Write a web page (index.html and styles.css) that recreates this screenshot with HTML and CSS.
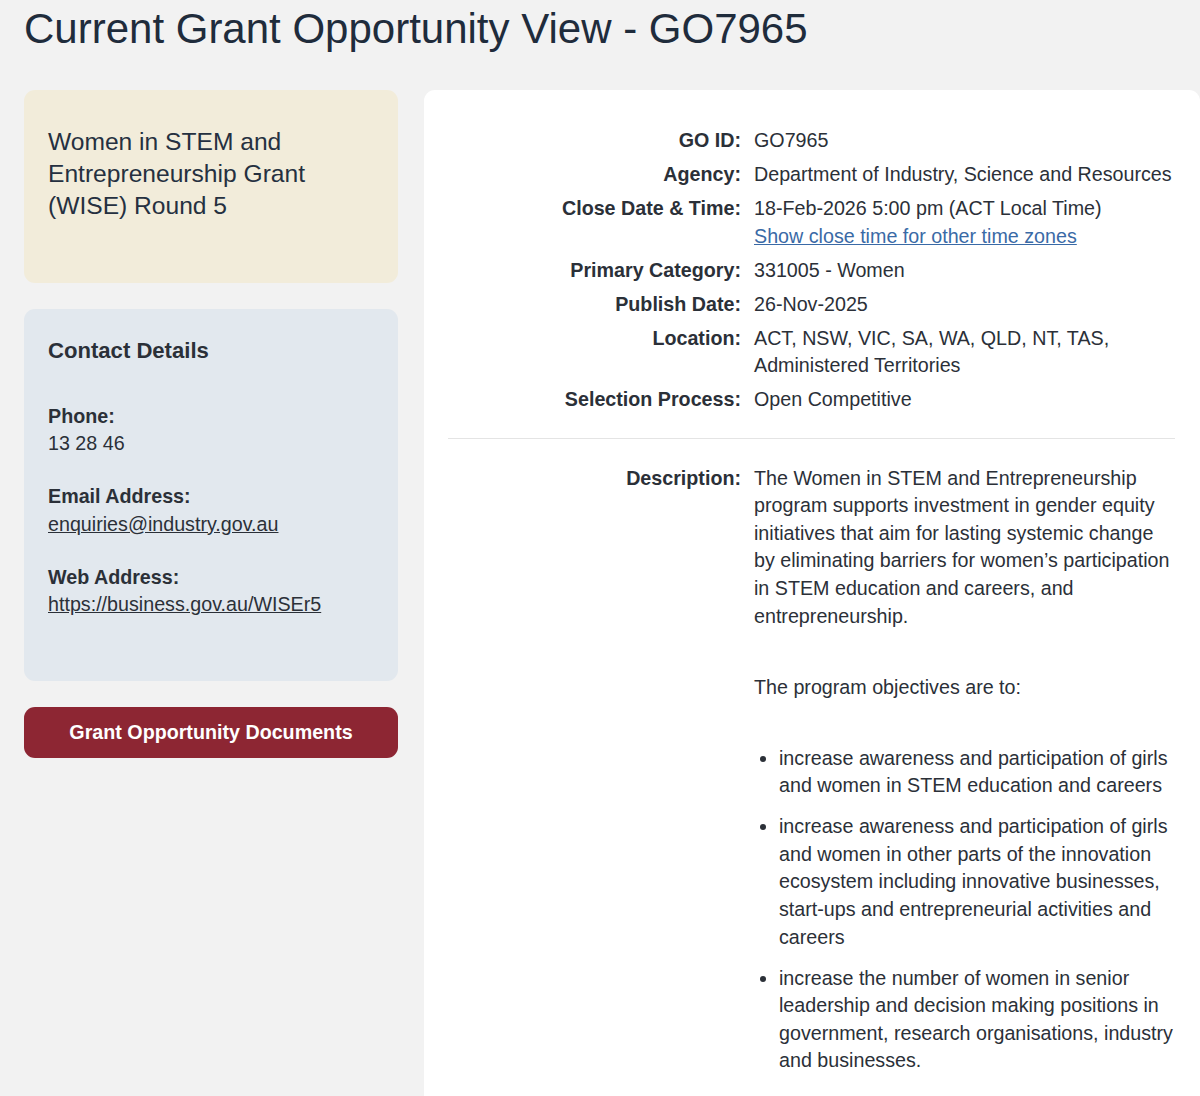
FILE: index.html
```html
<!DOCTYPE html>
<html lang="en">
<head>
<meta charset="utf-8">
<title>Current Grant Opportunity View - GO7965</title>
<link rel="stylesheet" href="styles.css">
</head>
<body>
<div class="page">
  <h1 class="page-title">Current Grant Opportunity View - GO7965</h1>
  <div class="layout">
    <aside class="sidebar">
      <div class="card card-title">
        <h2>Women in STEM and Entrepreneurship Grant (WISE) Round 5</h2>
      </div>
      <div class="card card-contact">
        <h3>Contact Details</h3>
        <div class="contact-group">
          <div class="contact-label">Phone:</div>
          <div class="contact-value">13 28 46</div>
        </div>
        <div class="contact-group">
          <div class="contact-label">Email Address:</div>
          <div class="contact-value"><a href="#">enquiries@industry.gov.au</a></div>
        </div>
        <div class="contact-group">
          <div class="contact-label">Web Address:</div>
          <div class="contact-value"><a href="#">https://business.gov.au/WISEr5</a></div>
        </div>
      </div>
      <a class="btn-docs" href="#">Grant Opportunity Documents</a>
    </aside>
    <main class="panel">
      <dl class="details">
        <dt>GO ID:</dt>
        <dd>GO7965</dd>
        <dt>Agency:</dt>
        <dd>Department of Industry, Science and Resources</dd>
        <dt>Close Date &amp; Time:</dt>
        <dd>18-Feb-2026 5:00 pm (ACT Local Time)<br><a class="tz-link" href="#">Show close time for other time zones</a></dd>
        <dt>Primary Category:</dt>
        <dd>331005 - Women</dd>
        <dt>Publish Date:</dt>
        <dd>26-Nov-2025</dd>
        <dt>Location:</dt>
        <dd>ACT, NSW, VIC, SA, WA, QLD, NT, TAS, Administered Territories</dd>
        <dt>Selection Process:</dt>
        <dd>Open Competitive</dd>
      </dl>
      <hr class="divider">
      <dl class="details">
        <dt>Description:</dt>
        <dd class="description">
          <p>The Women in STEM and Entrepreneurship program supports investment in gender equity initiatives that aim for lasting systemic change by eliminating barriers for women’s participation in STEM education and careers, and entrepreneurship.</p>
          <p>The program objectives are to:</p>
          <ul>
            <li>increase awareness and participation of girls and women in STEM education and careers</li>
            <li>increase awareness and participation of girls and women in other parts of the innovation ecosystem including innovative businesses, start-ups and entrepreneurial activities and careers</li>
            <li>increase the number of women in senior leadership and decision making positions in government, research organisations, industry and businesses.</li>
          </ul>
        </dd>
      </dl>
    </main>
  </div>
</div>
</body>
</html>
```
FILE: styles.css
```css
* { box-sizing: border-box; }
html, body { margin: 0; padding: 0; }
body {
  background: #f2f2f2;
  font-family: "Liberation Sans", Arial, Helvetica, sans-serif;
  color: #2b3038;
  font-size: 19.7px;
  line-height: 27.6px;
}
.page {
  padding: 0 0 0 24px;
}
.page-title {
  margin: 0;
  padding: 5px 0 0 0;
  font-size: 42px;
  line-height: 48px;
  font-weight: normal;
  color: #1f2c3c;
  height: 90px;
}
.layout {
  display: grid;
  grid-template-columns: 374px 1fr;
  column-gap: 26px;
  align-items: start;
}
.sidebar {
  display: flex;
  flex-direction: column;
  gap: 26px;
}
.card {
  border-radius: 11px;
  padding: 0 24px;
}
.card-title {
  background: #f2ecda;
  padding-top: 36px;
  padding-bottom: 61px;
}
.card-title h2 {
  margin: 0;
  font-size: 24.6px;
  line-height: 32px;
  font-weight: normal;
  color: #253040;
}
.card-contact {
  background: #e2e8ee;
  padding-top: 28px;
  padding-bottom: 36px;
}
.card-contact h3 {
  margin: 0 0 37px 0;
  font-size: 22.1px;
  line-height: 28.5px;
  font-weight: bold;
  color: #2b3038;
}
.contact-group {
  margin-bottom: 25.5px;
}
.contact-label {
  font-weight: bold;
}
.contact-value a {
  color: #2b3038;
  text-decoration: underline;
}
.btn-docs {
  display: block;
  height: 51px;
  line-height: 51px;
  background: #8d2633;
  color: #ffffff;
  font-weight: bold;
  text-align: center;
  text-decoration: none;
  border-radius: 11px;
}
.panel {
  background: #ffffff;
  border-radius: 11px 11px 0 0;
  padding: 37px 25px 40px 24px;
  min-height: 1006px;
}
.details {
  display: grid;
  grid-template-columns: 293px 1fr;
  column-gap: 13px;
  row-gap: 6.4px;
  margin: 0;
}
.details dt {
  font-weight: bold;
  text-align: right;
  color: #2b3038;
}
.details dd {
  margin: 0;
}
.tz-link {
  color: #3a6aa6;
  text-decoration: underline;
}
.divider {
  border: 0;
  border-top: 1px solid #e4e4e4;
  margin: 24px 0 26px 0;
}
.description p {
  margin: 0 0 43.4px 0;
}
.description ul {
  margin: 0;
  padding-left: 25px;
}
.description li {
  margin-bottom: 13.4px;
}
```
